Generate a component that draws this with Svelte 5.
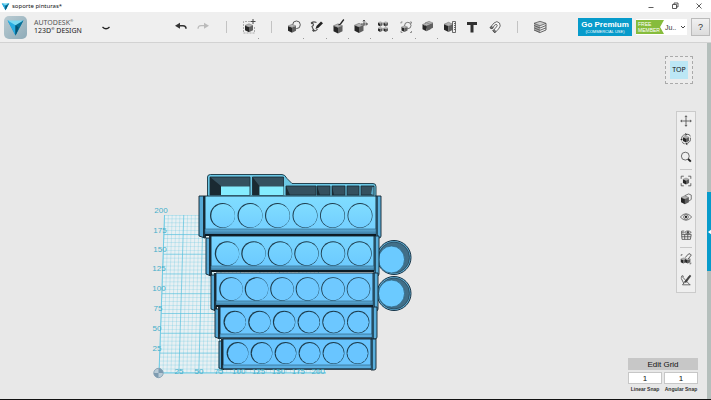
<script>
  const tools = [
    { id: 'primitives', label: 'Primitives', menu: true },
    { id: 'sketch', label: 'Sketch', menu: true },
    { id: 'construct', label: 'Construct', menu: true },
    { id: 'modify', label: 'Modify', menu: true },
    { id: 'pattern', label: 'Pattern', menu: true },
    { id: 'grouping', label: 'Grouping', menu: true },
    { id: 'combine', label: 'Combine', menu: true },
    { id: 'measure', label: 'Measure', menu: false },
    { id: 'text', label: 'Text', menu: false },
    { id: 'magnet', label: 'Snap', menu: false }
  ];
  const navGroups = [
    ['pan', 'orbit', 'zoom'],
    ['fit', 'views', 'eye', 'gridview'],
    ['snapping', 'sketches']
  ];

  const rows = [
    { left: 205, right: 376, top: 196, ledge: 229, bottom: 235, sl: 199, sr: 381, sb: 238, cx: 222.5, step: 27.5, cy: 215.5, r: 12.5, fill: 'url(#r1)' },
    { left: 211, right: 374, top: 236, ledge: 266, bottom: 271, sl: 206, sr: 379, sb: 276, cx: 227, step: 26.5, cy: 253.5, r: 12.2, fill: 'url(#r2)' },
    { left: 216, right: 373, top: 273, ledge: 301, bottom: 306, sl: 211, sr: 378, sb: 311, cx: 231, step: 25.5, cy: 289, r: 11.8, fill: '#6fc9ff' },
    { left: 220, right: 372, top: 307, ledge: 334, bottom: 338, sl: 215, sr: 377, sb: 339, cx: 234.7, step: 24.7, cy: 322, r: 11.2, fill: '#6cc7ff' },
    { left: 223, right: 371, top: 339, ledge: 365, bottom: 369, sl: 219, sr: 376, sb: 370, cx: 237.5, step: 24, cy: 353, r: 10.9, fill: '#69c5ff' }
  ];

  const lines = Array.from({ length: 41 }, (_, i) => i);
  const gy = (i) => 373 - i * 3.98 + i * i * 0.0007;
  const gx = (i) => 159 + (i * 5.5) / 40;
  const sideLabels = [
    ['200', 161, 213], ['175', 160, 233], ['150', 160, 252], ['125', 159, 271],
    ['100', 159, 291], ['75', 158, 311], ['50', 157, 331], ['25', 157, 351]
  ];
  const baseLabels = ['25', '50', '75', '100', '125', '150', '175', '200'];

  let linear = $state('1');
  let angular = $state('1');
</script>

{#snippet cube(x, y, s)}
  <g transform={`translate(${x} ${y}) scale(${s / 10})`}>
    <path d="M0 2.5 5 4.5V11L0 8.5z" fill="#262626" stroke="none" />
    <path d="M5 4.5 10 2.5v6L5 11z" fill="#606060" stroke="none" />
    <path d="M0 2.5 5 0.3l5 2.2-5 2z" fill="#b4b4b4" stroke="#555" stroke-width=".5" />
  </g>
{/snippet}

{#snippet icon(id)}
  <svg class="icon" viewBox="0 0 16 16" aria-hidden="true" fill="none" stroke="#484848">
    {#if id === 'undo'}
      <path d="M5 6.7h5q3 0 3 3" stroke="#333" stroke-width="1.5" />
      <path d="M2 6.7 7 3.7v6z" fill="#333" stroke="none" />
    {:else if id === 'redo'}
      <path d="M11 6.7H6q-3 0-3 3" stroke="#bbb" stroke-width="1.2" />
      <path d="m14 6.7-5-3v6z" fill="#bbb" stroke="none" />
    {:else if id === 'insert'}
      <path d="M9 2.5H2.5V14h11V8" stroke="#999" stroke-width=".8" stroke-dasharray="2 1" />
      {@render cube(4, 4.5, 8)}
      <path d="M12 0v5M9.5 2.5h5" />
    {:else if id === 'primitives'}
      <circle cx="10.5" cy="5.8" r="3.8" fill="#efefef" stroke-width=".9" />
      {@render cube(2, 5, 8)}
    {:else if id === 'sketch'}
      <path d="M7.500 3.500Q4 2 3 4q3 1.500 0 3.500L4.500 11q2 2 4-1" stroke="#555" stroke-width="1.200" />
      <path d="m6.5 10 1-3 4.500-4.500 2 1.700-4.500 4.600z" fill="#222" stroke="none" />
      <circle cx="3" cy="4" r=".8" fill="#555" />
      <circle cx="4.500" cy="11.500" r=".8" fill="#555" />
    {:else if id === 'construct'}
      {@render cube(2.5, 4.5, 9)}
      <path d="M7.500 6 9.500 5l3.300-4.500" stroke="#222" stroke-width="1.3" />
    {:else if id === 'modify'}
      {@render cube(1.5, 4, 9)}
      <path d="M8 5h6.500m-1.800-1.500L14.500 5l-1.800 1.500M11 1v6M9.800 2.2 11 1l1.2 1.2" stroke-width=".9" />
    {:else if id === 'pattern'}
      {@render cube(3, 2.5, 4.5)}
      {@render cube(8.5, 2.5, 4.5)}
      {@render cube(3, 8, 4.5)}
      {@render cube(8.5, 8, 4.5)}
    {:else if id === 'grouping'}
      <path d="M3 4.500V3h1.500M12 3h1.500v1.500M13.500 12v1.500H12M4.500 13.500H3V12" stroke="#777" stroke-width=".8" />
      <circle cx="9.800" cy="6.500" r="3.2" fill="#efefef" stroke-width=".7" />
      {@render cube(3.500, 6.500, 6)}
    {:else if id === 'combine'}
      {@render cube(5, 2, 8)}
      {@render cube(2.5, 3.5, 8)}
    {:else if id === 'measure'}
      {@render cube(2, 3, 9)}
      <path d="M10.5 2.5h3v11h-3zM12 4.5h1.5M12 6.5h1.5M12 8.5h1.5M12 10.5h1.5" fill="#efefef" stroke-width=".8" />
    {:else if id === 'text'}
      <path d="M3 3h10v3h-3.500v7.500h-3V6H3z" fill="#303030" stroke="none" />
    {:else if id === 'magnet'}
      <path d="M3 8.8 7 4Q10 1.2 12.5 4q2 3-1 6l-3.7 3.8-2-1.9L9.4 8q1.4-1.4.5-2.3-1-.8-2.3.5L5 9.8z" fill="#f8f8f8" stroke-width=".8" />
      <path d="m3 8.8 1.3-1.5L6.3 8.6 5 9.8zM5.8 11.9 7 10.6l2 1.8-1.2 1.4z" fill="#777" stroke-width=".7" />
    {:else if id === 'material'}
      <path d="m2 4.300 6 2.400v7.500l-6-3z" fill="#aaa" stroke="none" />
      <path d="m2 4.3 6-2 6 2-6 2.5z" fill="#ccc" stroke-width=".7" />
      <path d="m2 6.5 6 2.5 6-2.5M2 8.8l6 2.5 6-2.5M2 11l6 2.500 6-2.5M14 4.3V11" stroke="#555" stroke-width=".9" />
    {:else if id === 'pan'}
      <path d="M8 2v12M2 8h12M6.7 3.5 8 2l1.3 1.5M6.7 12.5 8 14l1.3-1.5M3.5 6.7 2 8l1.5 1.3M12.5 6.7 14 8l-1.5 1.3" stroke-width=".9" />
    {:else if id === 'orbit'}
      {@render cube(4.5, 4.300, 7)}
      <path d="M3 8.500Q2.500 4 7 3M13 6.500q1 4.500-3.500 6.500M9 2.500q3.500-.2 4 2.500M3.500 11q1 2.500 3 2.500" stroke-width=".9" />
      <path d="m7 1 2.5 1.500-2 2zM9.500 12 7 13.500l2.500 1.500zM1.5 8h2.800l-1.300 2z" fill="#333" stroke="none" />
    {:else if id === 'zoom'}
      <circle cx="7.2" cy="7" r="4.5" stroke-width=".9" />
      <path d="m10.500 10.300 3 3" stroke="#222" stroke-width="2.200" />
    {:else if id === 'fit'}
      <path d="M2.500 5.5v-3h3M10.5 2.500h3v3M13.500 10.5v3h-3M5.5 13.500h-3v-3" stroke-width=".9" />
      {@render cube(4.5, 4.3, 7)}
    {:else if id === 'views'}
      <path d="m7 4 4-1.8 3 1.3v5l-3 2z" fill="#eee" stroke-width=".8" />
      {@render cube(2.3, 4, 9)}
    {:else if id === 'eye'}
      <path d="M1.5 8Q8 .5 14.5 8 8 15.500 1.5 8z" stroke="#666" />
      <circle cx="8" cy="8" r="2.7" stroke-width=".8" />
      <circle cx="8" cy="8" r="1.300" fill="#222" stroke="none" />
    {:else if id === 'gridview'}
      <path d="M6 3.500H3v4h11L13 13H3.500L3 7.500M3 10h10.500M6.500 7.500V13M10 7.500V13M3 5.500h3" stroke-width=".9" />
      <path d="M6.500 5Q10 1.500 14 5 10 8.500 6.500 5z" fill="#efefef" stroke-width=".8" />
      <circle cx="10.200" cy="5" r="1" fill="#333" />
    {:else if id === 'snapping'}
      {@render cube(2, 6.500, 6)}
      {@render cube(7, 6.500, 6)}
      <path d="m7 6.500 3.500-4q2.500-1.500 3.500 1L10.500 8" fill="#efefef" stroke-width="1" />
      <path d="M2.500 4.500V3H4M13.500 12v1.500H12" stroke-width=".8" />
    {:else if id === 'sketches'}
      <path d="m3.500 4 9 9.500M2.500 5.500l1-2.500 2 1M12 3l-8 10.500h9M2.500 6l3 6" stroke-width=".9" />
      <path d="m6 10 6.500-8 1.500 1.500-6 8z" fill="#444" stroke="none" />
    {/if}
  </svg>
{/snippet}

{#snippet gem()}
  <path d="M2 3 12 6 22 3 12 22z" fill="#168ebd" />
  <path d="M2 3 12 6v16z" fill="#28ace2" />
  <path d="M12 6 22 3 12 22z" fill="#087097" />
  <path d="M2 3h20L12 9z" fill="#7bd9f2" />
  <path d="m12 9 4 3-4 10z" fill="#065272" />
{/snippet}

<div class="app">
  <header class="titlebar">
    <svg class="mark" viewBox="0 0 24 24" aria-hidden="true">{@render gem()}</svg>
    <span class="doc">soporte pinturas*</span>
    <div class="window">
      <button aria-label="Minimize"><svg viewBox="0 0 8 8"><path d="M1.500 5.500h5" /></svg></button>
      <button aria-label="Restore"><svg viewBox="0 0 8 8"><path d="M1.500 2.500h4v4h-4zM3 2.500v-1.500h4v4H5.500" /></svg></button>
      <button aria-label="Close"><svg viewBox="0 0 8 8"><path d="m1.500 1.500 5 5m0-5-5 5" /></svg></button>
    </div>
  </header>

  <div class="toolbar">
    <div class="brand">
      <div class="logo"><svg viewBox="0 0 24 24" aria-hidden="true">{@render gem()}</svg></div>
      <div class="name"><span>AUTODESK<sup>®</sup></span><strong>123D<sup>®</sup> DESIGN</strong></div>
      <button class="plain" aria-label="Application menu">
        <svg class="chev" viewBox="0 0 8 8"><path d="M.5 4Q4 7.500 7.500 4" fill="none" stroke="#222" stroke-width="1.300" /></svg>
      </button>
    </div>
    <div class="tools">
      <button class="tool" aria-label="Undo">{@render icon('undo')}</button>
      <button class="tool" aria-label="Redo">{@render icon('redo')}</button>
      <i class="sep"></i>
      <button class="tool menu" aria-label="Insert">{@render icon('insert')}</button>
      <i class="sep"></i>
      {#each tools as t}
        <button class="tool" class:menu={t.menu} aria-label={t.label}>{@render icon(t.id)}</button>
      {/each}
      <i class="sep"></i>
      <button class="tool" aria-label="Material">{@render icon('material')}</button>
    </div>
    <div class="account">
      <button class="premium"><b>Go Premium</b><small>(COMMERCIAL USE)</small></button>
      <button class="member">
        <span class="tag">FREE<br />MEMBER</span><span class="user">Ju..</span>
        <svg viewBox="0 0 8 8" aria-hidden="true"><path d="m2 3 2 2 2-2" fill="none" stroke="#444" /></svg>
      </button>
      <button class="help">?</button>
    </div>
  </div>

  <main>
    <svg class="scene" viewBox="0 43 711 356" preserveAspectRatio="xMidYMid meet" role="img" aria-label="Paint rack model, top view">
      <defs>
        <linearGradient id="r1" x2="0" y2="1"><stop stop-color="#80ddff" /><stop offset="1" stop-color="#72ceff" /></linearGradient>
        <linearGradient id="r2" x2="0" y2="1"><stop stop-color="#78d5ff" /><stop offset="1" stop-color="#6ccaff" /></linearGradient>
        <linearGradient id="lip" x2="0" y2="1"><stop stop-color="#5eb0dd" /><stop offset="1" stop-color="#347197" /></linearGradient>
        <clipPath id="plane"><path d="M164.500 215H326V373H159z" /></clipPath>
      </defs>

      <path d="M164.500 215H326V373H159z" fill="#e8f0f3" />
      <g clip-path="url(#plane)" stroke="#53bfdd">
        {#each lines as i}
          <path d={`M${gx(i)} ${gy(i)}H326`} stroke-width={i % 5 ? 0.5 : 0.9} opacity={i % 5 ? 0.5 : 0.75} />
          <path d={`M${159 + i * 3.98} 373L${164.5 + i * 3.85} 215`} stroke-width={i % 5 ? 0.5 : 0.9} opacity={i % 5 ? 0.5 : 0.75} />
        {/each}
      </g>
      <path d="M164.500 215 159 373H326" fill="none" stroke="#6fcbe4" />
      <g class="ticks">
        {#each sideLabels as [text, x, y]}<text {x} {y}>{text}</text>{/each}
      </g>

      <!-- back trays -->
      <path d="M207.500 197V177q0-2.500 3-2.500H282q3 0 5 4l5 5h81q3 0 3 3V197z" fill="#6bc7e4" stroke="#173542" stroke-width=".9" />
      <path d="M210 177h40v18h-40zM252.500 177h31v18h-31zM286 186h30v9h-30zM317 186h13v9h-13zM332 186h13v9h-13zM347 186h12v9h-12zM361 186h13v9h-13z" fill="#35515f" stroke="#182b36" stroke-width=".8" />
      <path d="M210 177l11 9v9h-11zM252.500 177l7 9v9h-7zM286 186l4 9h-4zM317 186l3 9h-3zM332 186l2 9h-2z" fill="#1a2a32" />
      <path d="M221 186.500h28.500v8.500H221zM259.500 186.500h24v8.500h-24z" fill="#85edff" />
      <path d="m371 194 1.500-7h1v8z" fill="#5aa9c7" />

      <!-- tube holders -->
      {#each [257.5, 293.5] as y, n}
        <circle cx="394" cy={y} r="17" fill="#61b1d8" stroke="#163346" />
        <circle cx="394" cy={y} r="15.500" fill="#426f88" stroke="#214457" stroke-width=".7" />
        <ellipse cx="391.500" cy={y + (n ? 0 : 2)} rx="13" ry="13.500" fill="#6bcaff" stroke="#2f6482" stroke-width=".8" />
      {/each}

      <!-- stepped shelves, back to front -->
      {#each rows as r, n}
        <path d={`M${r.sl} ${r.top + (n ? 2 : 0)}h${r.left - r.sl}V${r.sb}L${r.sl} ${r.sb - 2}z`} fill="#56a9d6" stroke="#10222d" stroke-width=".9" />
        <path d={`M${r.left - 2} ${r.top}h3V${r.sb}h-3z`} fill="#1b303d" />
        <path d={`M${r.right} ${r.top}H${r.sr}V${r.sb - 2}q0 2-2 2H${r.right}z`} fill="#5aafdc" stroke="#10222d" stroke-width=".9" />
        <path d={`M${r.right + 1.5} ${r.top}V${r.sb}`} stroke="#1c3a4b" stroke-width=".8" />
        <path d={`M${r.left} ${r.top}H${r.right}V${r.bottom}H${r.left}z`} fill={r.fill} stroke="#132530" stroke-width=".9" />
        <path d={`M${r.left} ${r.ledge}H${r.right}V${r.bottom}H${r.left}z`} fill={n < 3 ? 'url(#lip)' : '#5baee0'} stroke="#2a5d7b" stroke-width=".6" />
        <path d={`M${r.left} ${r.bottom}H${r.right}`} stroke="#0d1b24" stroke-width={n < 3 ? 1.8 : 1.2} />
        {#each [0, 1, 2, 3, 4, 5] as i}
          <circle cx={r.cx + i * r.step} cy={r.cy} r={r.r} fill="#1c3b4c" />
          <circle cx={r.cx + i * r.step + (5 - i) * 0.1 + 0.1} cy={r.cy + 0.2} r={r.r - 0.7} fill={r.fill} />
        {/each}
      {/each}

      <g class="ticks">
        {#each baseLabels as text, i}<text x={179 + i * 19.9} y="374">{text}</text>{/each}
      </g>
      <circle cx="158.500" cy="373" r="4.700" fill="#b9cbd7" stroke="#8ba6b8" />
      <path d="M158.500 373v-4.700a4.700 4.700 0 0 1 4.700 4.700zM158.500 373v4.700a4.700 4.700 0 0 1-4.700-4.700z" fill="#7e9bb0" />
    </svg>

    <button class="viewcube"><span>TOP</span></button>

    <nav aria-label="View controls">
      {#each navGroups as group, g}
        {#if g}<i></i>{/if}
        {#each group as id}<button aria-label={id}>{@render icon(id)}</button>{/each}
      {/each}
    </nav>

    <section class="grid">
      <button>Edit Grid</button>
      <div class="snaps">
        <div><input id="linear" bind:value={linear} /><label for="linear">Linear Snap</label></div>
        <div><input id="angular" bind:value={angular} /><label for="angular">Angular Snap</label></div>
      </div>
    </section>

    <aside><button aria-label="Open parts panel"><svg viewBox="0 0 4 6"><path d="M4 0v6L0 3z" fill="#fff" /></svg></button></aside>
  </main>
</div>

<style>
  :global(body) { margin: 0; }
  .app {
    display: flex;
    flex-direction: column;
    min-height: 100vh;
    font-family: "Liberation Sans", Arial, sans-serif;
    color: #222;
    background: #e8e8e8;
  }
  .app, .app * { box-sizing: border-box; }
  button { border: 0; padding: 0; background: none; font: inherit; color: inherit; display: flex; align-items: center; justify-content: center; }
  svg { display: block; }

  .titlebar { display: flex; align-items: center; height: 12px; padding-left: 1px; background: #fff; }
  .mark { width: 9px; height: 9px; }
  .doc { margin-left: 2px; font: 6px/12px "Noto Sans", sans-serif; color: #111; }
  .window { display: flex; gap: 16px; margin: 0 8px 0 auto; }
  .window svg { width: 8px; height: 8px; fill: none; stroke: #333; stroke-width: .8; }

  .toolbar { display: flex; align-items: center; height: 31px; background: #efefef; border-bottom: 1px solid #d2d2d2; }
  .brand { display: flex; align-items: center; width: 170px; padding-left: 4px; }
  .logo { width: 23px; height: 23px; padding: 2px; border-radius: 5px; background: linear-gradient(135deg, #b9cbd2, #8eabb8); }
  .name { display: flex; flex-direction: column; width: 69px; padding-left: 7px; font: 7px/8px "Noto Sans", sans-serif; color: #555; white-space: nowrap; }
  .name strong { font-weight: 400; color: #222; }
  .name sup { font-size: 4px; line-height: 0; }
  .plain { margin-left: 6px; }
  .chev { width: 8px; height: 8px; }
  .tools { display: flex; align-items: center; justify-content: space-between; width: 381px; }
  .tool { position: relative; width: 22px; height: 28px; }
  .tool.menu::after { content: ""; position: absolute; right: 1px; bottom: 2px; width: 1px; height: 1px; background: #999; }
  .icon { width: 16px; height: 16px; }
  .sep { width: 1px; height: 12px; margin: 0 11px; background: #c3c3c3; }
  .account { display: flex; align-items: center; gap: 4px; margin: 0 1px 0 auto; }
  .premium { flex-direction: column; width: 54px; height: 18px; background: #079bcb; color: #fff; }
  .premium b { font-size: 8px; line-height: 9px; white-space: nowrap; }
  .premium small { font-size: 4px; line-height: 5px; white-space: nowrap; }
  .member { width: 51px; height: 16px; background: #fff; justify-content: flex-start; }
  .tag { width: 28px; height: 14px; padding: 1px 0 0 2px; background: #86bc3c; color: #fff; font-size: 5px; line-height: 6px; text-align: left; clip-path: polygon(0 0, 100% 0, 86% 50%, 100% 100%, 0 100%); }
  .user { margin-left: 1px; font-size: 7px; color: #333; }
  .member svg { width: 8px; height: 8px; margin-left: auto; }
  .help { width: 19px; height: 18px; border: 1px solid #bbb; background: linear-gradient(#f1f1f1, #dcdcdc); font-size: 9px; color: #333; }

  main { position: relative; flex: 1; min-height: 320px; border-bottom: 1px solid #111; }
  .scene { position: absolute; inset: 0; width: 100%; height: 100%; }
  .ticks text { font-size: 8px; fill: #43afca; text-anchor: middle; }
  .viewcube { position: absolute; top: 13px; right: 18px; width: 28px; height: 28px; border: 1px dashed #aaa; background: #ececec; }
  .viewcube span { width: 18px; height: 18px; background: #bce7f5; font: 7px/18px "Noto Sans", sans-serif; color: #111; }
  nav { position: absolute; top: 68px; right: 15px; display: flex; flex-direction: column; align-items: center; width: 20px; padding: 0 0 3px; border: 1px solid #cbcbcb; background: #efefef; }
  nav button { width: 18px; height: 18px; }
  nav button:last-child { margin-top: 3px; }
  nav .icon { width: 14px; height: 14px; }
  nav i { width: 12px; height: 1px; margin: 3px 0 2px; background: #c8c8c8; }
  .grid { position: absolute; right: 13px; bottom: 5px; width: 70px; }
  .grid button { width: 100%; height: 12px; background: #c7c7c7; font-size: 8px; color: #111; }
  .snaps { display: grid; grid-template-columns: 1fr 1fr; gap: 2px; margin-top: 2px; }
  .snaps div { display: flex; flex-direction: column; align-items: center; }
  .grid input { width: 100%; height: 12px; padding: 0; border: 1px solid #c7c7c7; background: #fff; font: 8px "Liberation Sans", sans-serif; text-align: center; color: #111; }
  .grid label { font-size: 5px; font-weight: 700; line-height: 10px; white-space: nowrap; color: #333; }
  aside { position: absolute; top: 0; bottom: 0; right: 0; width: 4px; background: #b5bfbc; }
  aside button { width: 4px; height: 79px; margin-top: 149px; background: #079bcb; }
  aside svg { width: 3px; height: 6px; }
</style>
